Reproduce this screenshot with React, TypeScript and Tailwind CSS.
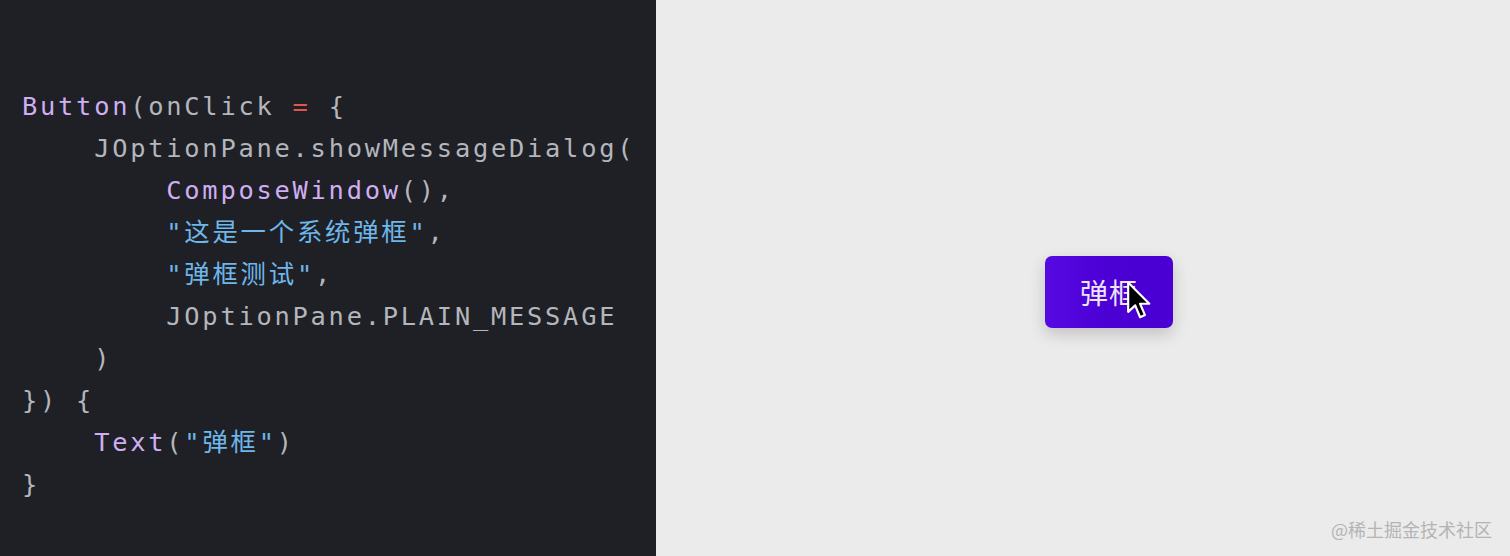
const mono = { fontFamily: '"DejaVu Sans Mono", "Noto Sans CJK SC", monospace' };

function Line({ indent = 0, children }: { indent?: number; children: React.ReactNode }) {
  return (
    <div className="h-[42px] leading-[42px] whitespace-pre">
      {' '.repeat(indent)}
      {children}
    </div>
  );
}

function Cursor() {
  return (
    <svg width="26" height="42" viewBox="0 0 24 38" className="absolute left-[81px] top-[24px]">
      <path
        d="M2 2 L2 29 L8.5 23 L13 34 L17.5 32 L13 21.5 L21.5 21.5 Z"
        fill="#000"
        stroke="#fff"
        strokeWidth="2"
        strokeLinejoin="round"
      />
    </svg>
  );
}

export default function App() {
  const p = 'text-[#cfaef2]';
  const g = 'text-[#b3b6bc]';
  const s = 'text-[#6fb6ea]';

  return (
    <div className="flex w-[1510px] h-[556px] overflow-hidden">
      <div
        className={`w-[656px] h-full bg-[#1e2025] pt-[85px] pl-[22px] text-[25.4px] tracking-[2.75px] ${g}`}
        style={mono}
      >
        <Line>
          <span className={p}>Button</span>(onClick <span className="text-[#e0584c]">=</span> {'{'}
        </Line>
        <Line indent={4}>JOptionPane.showMessageDialog(</Line>
        <Line indent={8}>
          <span className={p}>ComposeWindow</span>(),
        </Line>
        <Line indent={8}>
          <span className={s}>"这是一个系统弹框"</span>,
        </Line>
        <Line indent={8}>
          <span className={s}>"弹框测试"</span>,
        </Line>
        <Line indent={8}>JOptionPane.PLAIN_MESSAGE</Line>
        <Line indent={4}>)</Line>
        <Line>{'}) {'}</Line>
        <Line indent={4}>
          <span className={p}>Text</span>(<span className={s}>"弹框"</span>)
        </Line>
        <Line>{'}'}</Line>
      </div>

      <div className="relative flex-1 h-full bg-[#ebebeb] pt-[256px] pl-[389px]">
        <div className="relative w-[128px] h-[72px] rounded-[7px] bg-gradient-to-r from-[#5709e2] via-[#4b00d4] to-[#4a00d2] shadow-[0_6px_16px_rgba(0,0,0,0.18)] flex items-center justify-center">
          <span
            className="text-[28px] text-[#ece4fa] tracking-[1px] -mt-[1px]"
            style={{ fontFamily: '"Noto Sans CJK SC", sans-serif' }}
          >
            弹框
          </span>
          <Cursor />
        </div>
        <div
          className="absolute right-[18px] bottom-[13px] text-[18px] text-[#b4b4b4]"
          style={{ fontFamily: '"Noto Sans CJK SC", sans-serif' }}
        >
          @稀土掘金技术社区
        </div>
      </div>
    </div>
  );
}
